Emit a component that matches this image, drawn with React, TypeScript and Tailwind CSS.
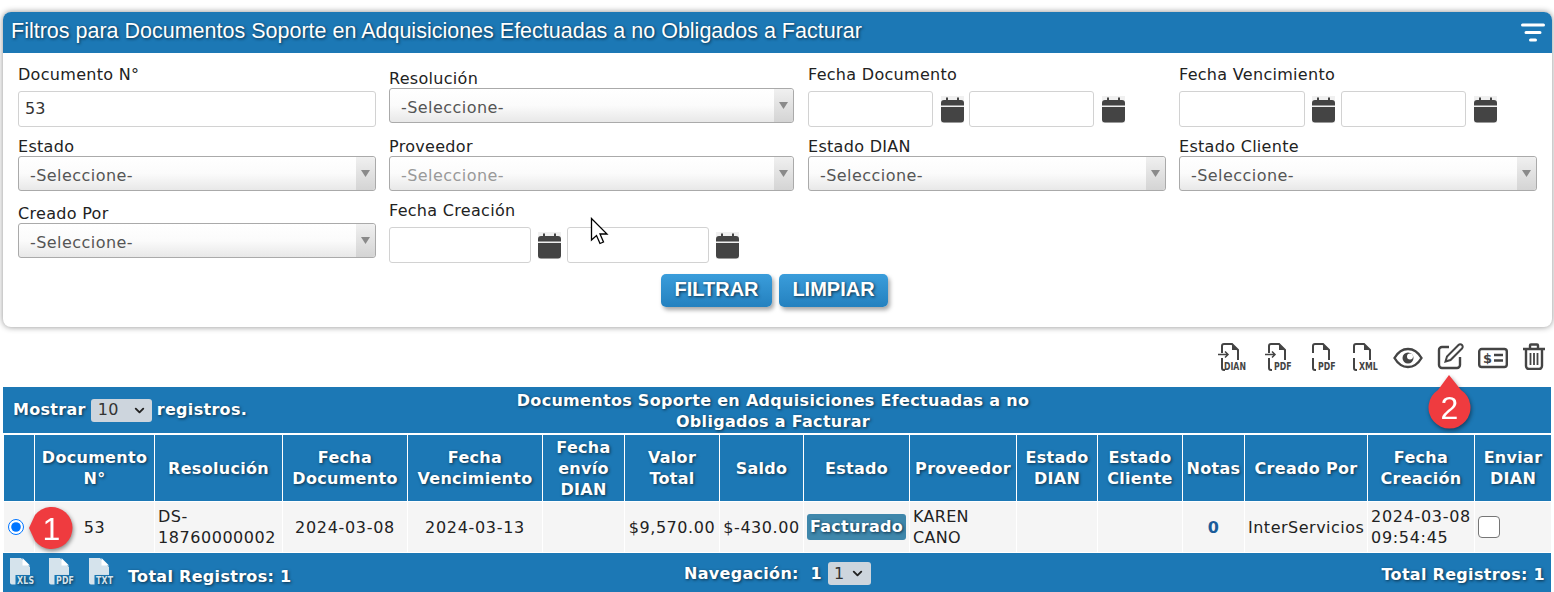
import React from "react";
import { ChevronDown } from "lucide-react";

const VERDANA = "font-['DejaVu_Sans',sans-serif]";
const SHADOW = "[text-shadow:1px_1px_3px_#0b2f47]";

const COLS = [
  { w: 31, label: "" },
  { w: 120, label: "Documento N°" },
  { w: 128, label: "Resolución" },
  { w: 125, label: "Fecha Documento" },
  { w: 135, label: "Fecha Vencimiento" },
  { w: 82, label: "Fecha envío DIAN" },
  { w: 95, label: "Valor Total" },
  { w: 84, label: "Saldo" },
  { w: 106, label: "Estado" },
  { w: 107, label: "Proveedor" },
  { w: 81, label: "Estado DIAN" },
  { w: 85, label: "Estado Cliente" },
  { w: 62, label: "Notas" },
  { w: 123, label: "Creado Por" },
  { w: 107, label: "Fecha Creación" },
  { w: 77, label: "Enviar DIAN" },
];

function Label({ children, className = "" }: { children: React.ReactNode; className?: string }) {
  return <div className={`h-5 text-[16px] leading-[22px] tracking-[0.3px] text-[#222] ${className}`}>{children}</div>;
}

function TextInput({ value = "", className = "" }: { value?: string; className?: string }) {
  return (
    <div className={`h-9 rounded-[3px] border border-[#d2d2d2] bg-white px-[6px] text-[16px] leading-[34px] text-[#333] ${className}`}>
      {value}
    </div>
  );
}

function SelectBox({ muted = false }: { muted?: boolean }) {
  return (
    <div className="flex h-[35px] items-stretch rounded-[3px] border border-[#aaa] bg-gradient-to-b from-white via-[#fbfbfb] to-[#e8e8e8]">
      <span className={`flex-1 pl-[11px] text-[16px] leading-[37px] tracking-[0.45px] ${muted ? "text-[#999]" : "text-[#555]"}`}>-Seleccione-</span>
      <span className="flex w-[19px] items-center justify-center rounded-r-[3px] bg-gradient-to-b from-[#f0f0f0] to-[#d4d4d4]">
        <svg width="9" height="7" viewBox="0 0 9 7"><path d="M0 0h9L4.5 7z" fill="#8a8a8a" /></svg>
      </span>
    </div>
  );
}

function CalendarIcon() {
  return (
    <svg width="23" height="27" viewBox="0 0 23 27" className="shrink-0">
      <rect width="23" height="27" fill="#f0f0f0" />
      <path d="M5 1.500h2V4h9V1.500h2V4h2a3 3 0 0 1 3 3v2.500H0V7a3 3 0 0 1 3-3h2z" fill="#444" />
      <path d="M0 11h23v12.500a3 3 0 0 1-3 3H3a3 3 0 0 1-3-3z" fill="#444" />
    </svg>
  );
}

function DateRange({ w, w2, gap = "ml-2", tail = "ml-2", lead = "ml-[7px]" }: { w: string; w2?: string; gap?: string; tail?: string; lead?: string }) {
  return (
    <div className="flex items-center">
      <TextInput className={w} />
      <span className={gap}><CalendarIcon /></span>
      <TextInput className={`${lead} ${w2 ?? w}`} />
      <span className={tail}><CalendarIcon /></span>
    </div>
  );
}

function FileIcon({ tag, arrow = false, solid = false, className = "" }: { tag: string; arrow?: boolean; solid?: boolean; className?: string }) {
  const c = solid ? "#d5e3ec" : "#444";
  const long = tag.length > 3;
  return (
    <svg width="29" height="30" viewBox="0 0 29 30" className={className}>
      {solid ? (
        <>
          <path d="M2 1h11l9 9v8H7.500v9.500H4a2 2 0 0 1-2-2z" fill={c} />
          <path d="M14.500 1l7.500 7.500h-7.500z" fill="#fff" />
        </>
      ) : (
        <>
          <path d="M4 10V3a2 2 0 0 1 2-2h8l6 6v10M4 15v10a2 2 0 0 0 2 2h1" fill="none" stroke={c} strokeWidth="2" />
          <path d="M14 1v6h6z" fill={c} />
          {arrow && <path d="M0 11.500h10M7 8.500l3 3-3 3" fill="none" stroke={c} strokeWidth="1.500" />}
        </>
      )}
      <text
        transform={`translate(${long ? 6 : 9} 27) scale(0.71 1)`}
        fontFamily="'DejaVu Sans', sans-serif"
        fontWeight="700"
        fontSize="11"
        fill={c}
      >
        {tag}
      </text>
    </svg>
  );
}

function Toolbar() {
  const stroke = { fill: "none", stroke: "#444", strokeWidth: 2.4 };
  return (
    <div className="flex h-[60px] items-start justify-end pr-[8px] pt-4">
      <FileIcon tag="DIAN" arrow />
      <FileIcon tag="PDF" arrow className="ml-[18px]" />
      <FileIcon tag="PDF" className="ml-[15px]" />
      <FileIcon tag="XML" className="ml-[12px]" />
      <svg width="30" height="22" viewBox="0 0 30 22" className="ml-[14px] mt-[4px]">
        <path d="M1.500 11C5 5 9.500 2 15 2s10 3 13.500 9C25 17 20.500 20 15 20S5 17 1.500 11z" {...stroke} />
        <circle cx="15" cy="11" r="5.500" fill="#444" />
        <circle cx="17" cy="9.500" r="3" fill="#fff" />
      </svg>
      <svg width="27" height="27" viewBox="0 0 27 27" className="ml-[14px]">
        <path d="M12 4H5a3 3 0 0 0-3 3v15a3 3 0 0 0 3 3h15a3 3 0 0 0 3-3v-8" {...stroke} />
        <path d="M8.500 18.500l1.500-5L21.500 2a2.300 2.300 0 0 1 3.500 3.500L13.500 17z" fill="none" stroke="#444" strokeWidth="2" />
      </svg>
      <svg width="30" height="22" viewBox="0 0 30 22" className="ml-[14px] mt-[4px]">
        <rect x="1.200" y="2" width="27.600" height="18" rx="2.500" {...stroke} />
        <path d="M16 8h9M16 13.500h9" stroke="#444" strokeWidth="2.400" />
        <text x="5" y="16" fontFamily="'DejaVu Sans', sans-serif" fontWeight="700" fontSize="13" fill="#444">$</text>
      </svg>
      <svg width="24" height="27" viewBox="0 0 24 27" className="ml-[14px]">
        <path d="M4 7v16a3 3 0 0 0 3 3h10a3 3 0 0 0 3-3V7M1 6h22M8 5V2.500a1 1 0 0 1 1-1h6a1 1 0 0 1 1 1V5" {...stroke} />
        <path d="M8.500 10v12M12 10v12M15.500 10v12" stroke="#444" strokeWidth="1.800" />
      </svg>
    </div>
  );
}

function MiniSelect({ value, className }: { value: string; className: string }) {
  return (
    <span className={`inline-flex h-[23px] items-center justify-between rounded-[3px] bg-[#cdd5dd] font-normal text-[#333] [text-shadow:none] ${className}`}>
      {value}
      <ChevronDown size={15} strokeWidth={3} color="#222" />
    </span>
  );
}

function Marker({ n, className, dir }: { n: string; className: string; dir: "left" | "up" }) {
  return (
    <svg width="50" height="60" viewBox="0 0 50 60" className={`absolute drop-shadow-[1px_2px_2px_rgba(0,0,0,0.45)] ${className}`}>
      {dir === "up" ? (
        <path d="M23 1L35 16A21 21 0 1 1 12 16z" fill="#ef3b3f" />
      ) : (
        <path d="M4 30L10 17A21 21 0 1 1 10 43z" fill="#ef3b3f" />
      )}
      <text
        x={dir === "up" ? 23.500 : 26.500}
        y={dir === "up" ? 45 : 41.500}
        textAnchor="middle"
        fontFamily="'Liberation Sans', sans-serif"
        fontSize="32"
        fill="#fff"
      >
        {n}
      </text>
    </svg>
  );
}

export default function App() {
  const cell = "border-x border-white px-[3px] text-center align-middle";
  return (
    <div className={`relative h-[592px] w-[1554px] overflow-hidden bg-white ${VERDANA}`}>
      <div className="pl-[3px] pt-3">
        {/* Filtros */}
        <section className="h-[315px] w-[1549px] rounded-lg bg-white shadow-[0_0_6px_rgba(0,0,0,0.45)]">
          <header className="flex h-[41px] items-center justify-between rounded-t-lg bg-[#1c78b5] pl-2 pr-[7px]">
            <h1 className={`pb-[2px] font-['Liberation_Sans',sans-serif] text-[21.5px] font-normal text-white ${SHADOW}`}>
              Filtros para Documentos Soporte en Adquisiciones Efectuadas a no Obligados a Facturar
            </h1>
            <svg width="24" height="22" viewBox="0 0 24 22">
              <path d="M1.500 3h21M5 10.500h14M9.500 18h5" stroke="#fff" strokeWidth="3" strokeLinecap="round" />
            </svg>
          </header>
          <div className="grid grid-cols-[358px_406px_358px_358px] grid-rows-[72px_64px_74px] gap-x-[13px] pl-[15px] pt-[11px]">
            <div>
              <Label className="mb-[7px]">Documento N°</Label>
              <TextInput value="53" />
            </div>
            <div className="pr-px pt-1">
              <Label>Resolución</Label>
              <SelectBox />
            </div>
            <div>
              <Label className="mb-[7px]">Fecha Documento</Label>
              <DateRange w="w-[125px]" lead="ml-[5px]" />
            </div>
            <div>
              <Label className="mb-[7px]">Fecha Vencimiento</Label>
              <DateRange w="w-[126px]" w2="w-[125px]" gap="ml-[7px]" lead="ml-[6px]" />
            </div>

            <div>
              <Label>Estado</Label>
              <SelectBox />
            </div>
            <div className="pr-px">
              <Label>Proveedor</Label>
              <SelectBox muted />
            </div>
            <div>
              <Label>Estado DIAN</Label>
              <SelectBox />
            </div>
            <div>
              <Label>Estado Cliente</Label>
              <SelectBox />
            </div>

            <div className="pt-[3px]">
              <Label>Creado Por</Label>
              <SelectBox />
            </div>
            <div>
              <Label className="mb-[7px]">Fecha Creación</Label>
              <DateRange w="w-[142px]" gap="ml-[7px]" lead="ml-[6px]" tail="ml-[7px]" />
            </div>
          </div>
          <div className="flex justify-center gap-[7px] pr-[6px]">
            {[
              { t: "FILTRAR", w: "w-[111px]" },
              { t: "LIMPIAR", w: "w-[109px]" },
            ].map((b) => (
              <button
                key={b.t}
                className={`h-[33px] ${b.w} rounded-[5px] bg-gradient-to-b from-[#3a9ddb] to-[#2481bf] pb-[4px] font-['Liberation_Sans',sans-serif] text-[20px] font-bold leading-[26px] text-white shadow-[2px_3px_4px_rgba(0,0,0,0.35)] ${SHADOW}`}
              >
                {b.t}
              </button>
            ))}
          </div>
        </section>

        <Toolbar />

        {/* Listado */}
        <section className={`w-[1548px] bg-[#1c78b5] text-[16px] font-bold tracking-[0.3px] text-white ${SHADOW}`}>
          <div className="flex h-[46px] items-center">
            <div className="flex w-[510px] items-center pl-[10px]">
              Mostrar
              <MiniSelect value="10" className="mx-[5px] w-[61px] pl-[7px] pr-[5px] text-[16px]" />
              registros.
            </div>
            <div className="w-[520px] pt-[2px] text-center leading-[21px]">
              Documentos Soporte en Adquisiciones Efectuadas a no Obligados a Facturar
            </div>
          </div>
          <table className="w-[1548px] table-fixed border-collapse border-t-2 border-white">
            <colgroup>
              {COLS.map((c) => (
                <col key={c.label} style={{ width: c.w }} />
              ))}
            </colgroup>
            <thead>
              <tr className="h-[67px]">
                {COLS.map((c) => (
                  <th key={c.label} className={`${cell} pt-[1px] text-[16px] font-bold leading-[21px]`}>
                    {c.label}
                  </th>
                ))}
              </tr>
            </thead>
            <tbody className="bg-[#f5f5f5] text-[16px] font-normal leading-[21px] tracking-[0.55px] text-[#222] [text-shadow:none]">
              <tr className="h-[51px] border-y border-white">
                <td className={cell}>
                  <input type="radio" readOnly checked className="ml-px block h-4 w-4 accent-[#0075ff]" />
                </td>
                <td className={`${cell} pt-[1px]`}>53</td>
                <td className={`${cell} pt-[1px] text-left`}>DS-<br />18760000002</td>
                <td className={`${cell} pt-[1px] tracking-[0.7px]`}>2024-03-08</td>
                <td className={`${cell} pt-[1px] tracking-[0.7px]`}>2024-03-13</td>
                <td className={cell}></td>
                <td className={`${cell} pt-[1px]`}>$9,570.00</td>
                <td className={`${cell} pt-[1px]`}>$-430.00</td>
                <td className={cell}>
                  <span className={`block h-[26px] rounded-[3px] bg-[#3f87ab] text-[16px] font-bold leading-[26px] tracking-[0.3px] text-white ${SHADOW}`}>Facturado</span>
                </td>
                <td className={`${cell} pt-[1px] text-left tracking-[0.3px]`}>KAREN CANO</td>
                <td className={cell}></td>
                <td className={cell}></td>
                <td className={`${cell} pt-[1px] font-bold text-[#1b5c9a]`}>0</td>
                <td className={`${cell} whitespace-nowrap pt-[1px] text-left tracking-[0.5px]`}>InterServicios</td>
                <td className={`${cell} pt-[1px] text-left tracking-[0.7px]`}>2024-03-08<br />09:54:45</td>
                <td className={`${cell} text-left`}>
                  <span className="block h-[22px] w-[22px] rounded-[4px] border border-[#767676] bg-white" />
                </td>
              </tr>
            </tbody>
          </table>
          <div className="relative flex h-[39px] items-center">
            <div className="flex items-center pl-[5px]">
              <FileIcon tag="XLS" solid />
              <FileIcon tag="PDF" solid className="ml-[10px]" />
              <FileIcon tag="TXT" solid className="ml-[11px]" />
              <span className="ml-[12px] mt-[10px]">Total Registros: 1</span>
            </div>
            <div className="absolute left-[681px] top-[9px] flex items-center">
              Navegación:&nbsp; 1
              <MiniSelect value="1" className="ml-[6px] w-[43px] pl-[6px] pr-[6px] text-[16px]" />
            </div>
            <span className="ml-auto mr-[6px] mt-[5px]">Total Registros: 1</span>
          </div>
        </section>
      </div>

      {/* anotaciones sobre la captura */}
      <Marker n="1" dir="left" className="left-[25px] top-[498px]" />
      <Marker n="2" dir="up" className="left-[1426px] top-[374px]" />
      <svg width="22" height="32" viewBox="0 0 22 32" className="absolute left-[590px] top-[217px]">
        <path d="M1.500 1.500V23l5-4.500 3.500 8 3.500-1.500-3.500-8h7z" fill="#fff" stroke="#000" strokeWidth="1.300" />
      </svg>
    </div>
  );
}
